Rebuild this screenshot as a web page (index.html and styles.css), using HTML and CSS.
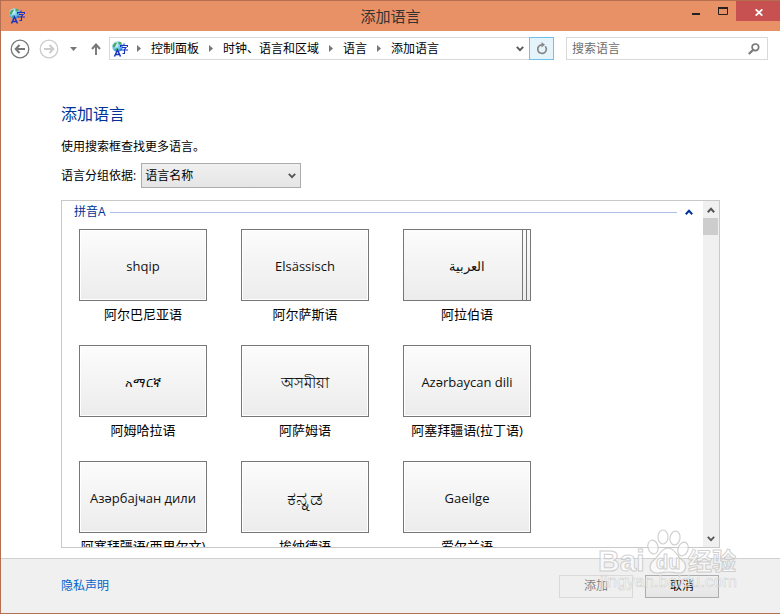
FILE: index.html
```html
<!DOCTYPE html>
<html lang="zh-CN">
<head>
<meta charset="utf-8">
<title>添加语言</title>
<link rel="stylesheet" href="styles.css">
</head>
<body>
<svg class="defs" aria-hidden="true">
  <defs>
    <radialGradient id="sea" cx="35%" cy="30%" r="75%">
      <stop offset="0" stop-color="#eefaff"/>
      <stop offset=".5" stop-color="#7fd0f2"/>
      <stop offset="1" stop-color="#2a86cc"/>
    </radialGradient>
    <symbol id="lang" viewBox="0 0 16 16">
      <circle cx="5.500" cy="5.500" r="5.300" fill="url(#sea)"/>
      <path d="M.5 5l2-3 2.500-.6L4.500 3 3 5.500 2 7zM6.500 .5l3 1-1 2h-2zM4 7l2 1-1 2-2-1z" fill="#43a860"/>
      <path d="M2.500 15.500L5.500 9 8.500 15.500M3.500 13.500H7.500" fill="none" stroke="#1a32c0" stroke-width="1.500"/>
      <path d="M12 2.500v1.500M8.500 6V4.500h7V6M10 6.500h4L12.500 8.500V12.500h-2M8.500 9h7.500" fill="none" stroke="#1a32c0" stroke-width="1.100"/>
    </symbol>
    <symbol id="down" viewBox="0 0 8 6"><path d="M.8 .8L4 4.200 7.200 .8" fill="none" stroke="currentColor" stroke-width="1.800"/></symbol>
    <symbol id="up" viewBox="0 0 8 6"><path d="M.8 5.200L4 1.800 7.200 5.200" fill="none" stroke="currentColor" stroke-width="2"/></symbol>
    <symbol id="right" viewBox="0 0 4 7"><path d="M0 0l4 3.500L0 7z" fill="currentColor"/></symbol>
  </defs>
</svg>
<div class="window">
  <header class="titlebar">
    <svg class="app-icon"><use href="#lang"/></svg>
    <h1>添加语言</h1>
    <div class="controls">
      <button aria-label="最小化"><svg viewBox="0 0 8 8" width="8" height="8"><path d="M0 6h8v2H0z" fill="#222"/></svg></button>
      <button aria-label="最大化"><svg viewBox="0 0 10 8" width="10" height="8"><path d="M.5 1h9v6.500h-9z" fill="none" stroke="#222"/><path d="M0 0h10v2H0z" fill="#222"/></svg></button>
      <button class="close" aria-label="关闭"><svg viewBox="0 0 8 7" width="8" height="7"><path d="M.7 .3L7.300 6.700M7.300 .3L.7 6.700" stroke="#fff" stroke-width="1.700"/></svg></button>
    </div>
  </header>
  <nav class="toolbar">
    <button class="round" aria-label="后退"><svg viewBox="0 0 20 20"><circle cx="10" cy="10" r="8.800" fill="none" stroke="currentColor" stroke-width="1.300"/><path d="M15 10H6M9.500 6L5.700 10l3.800 4" fill="none" stroke="currentColor" stroke-width="2"/></svg></button>
    <button class="round off" disabled aria-label="前进"><svg viewBox="0 0 20 20"><circle cx="10" cy="10" r="8.800" fill="none" stroke="currentColor" stroke-width="1.300"/><path d="M5 10h9M10.500 6l3.800 4-3.800 4" fill="none" stroke="currentColor" stroke-width="2"/></svg></button>
    <button class="recent" aria-label="最近"><svg viewBox="0 0 7 4" width="7" height="4"><path d="M0 0h7L3.500 4z" fill="currentColor"/></svg></button>
    <button class="level" aria-label="上移"><svg viewBox="0 0 10 12" width="10" height="12"><path d="M5 12V2M1 6l4-4.500L9 6" fill="none" stroke="currentColor" stroke-width="1.900"/></svg></button>
    <div class="address">
      <svg class="app-icon"><use href="#lang"/></svg>
      <svg class="sep"><use href="#right"/></svg><a href="#">控制面板</a>
      <svg class="sep"><use href="#right"/></svg><a href="#">时钟、语言和区域</a>
      <svg class="sep"><use href="#right"/></svg><a href="#">语言</a>
      <svg class="sep"><use href="#right"/></svg><a href="#">添加语言</a>
      <button class="history" aria-label="以前的位置"><svg class="chev"><use href="#down"/></svg></button>
      <button class="refresh" aria-label="刷新"><svg viewBox="0 0 12 13" width="12" height="13"><path d="M9.200 4.200A4.300 4.300 0 1 1 6 2.800" fill="none" stroke="currentColor" stroke-width="1.700"/><path d="M5.500 0v5.400L9 2.700z" fill="currentColor"/></svg></button>
    </div>
    <div class="search">
      <input type="search" aria-label="搜索语言" placeholder="搜索语言">
      <svg viewBox="0 0 12 12" width="12" height="12"><circle cx="7.400" cy="4.300" r="3.300" fill="none" stroke="#777" stroke-width="1.700"/><path d="M5 7L.8 11" stroke="#777" stroke-width="2.200"/></svg>
    </div>
  </nav>
  <main>
    <h2>添加语言</h2>
    <p>使用搜索框查找更多语言。</p>
    <div class="group">
      <label for="by">语言分组依据:</label>
      <div class="drop">
        <select id="by"><option>语言名称</option></select>
        <svg class="chev"><use href="#down"/></svg>
      </div>
    </div>
    <section class="panel">
      <div class="content">
        <h3><span>拼音A</span><svg class="chev"><use href="#up"/></svg></h3>
        <div class="grid">
          <div class="item"><button id="l1">shqip</button><label for="l1">阿尔巴尼亚语</label></div>
          <div class="item"><button id="l2">Elsässisch</button><label for="l2">阿尔萨斯语</label></div>
          <div class="item"><button id="l3" class="stack" lang="ar">العربية</button><label for="l3">阿拉伯语</label></div>
          <div class="item"><button id="l4" lang="am">አማርኛ</button><label for="l4">阿姆哈拉语</label></div>
          <div class="item"><button id="l5" class="large" lang="as">অসমীয়া</button><label for="l5">阿萨姆语</label></div>
          <div class="item"><button id="l6">Azərbaycan dili</button><label for="l6">阿塞拜疆语(拉丁语)</label></div>
          <div class="item"><button id="l7">Азәрбајҹан дили</button><label for="l7">阿塞拜疆语(西里尔文)</label></div>
          <div class="item"><button id="l8" class="huge" lang="kn">ಕನ್ನಡ</button><label for="l8">埃纳德语</label></div>
          <div class="item"><button id="l9">Gaeilge</button><label for="l9">爱尔兰语</label></div>
        </div>
      </div>
      <div class="scrollbar" aria-hidden="true">
        <svg class="chev"><use href="#up"/></svg>
        <div class="thumb"></div>
        <svg class="chev"><use href="#down"/></svg>
      </div>
    </section>
  </main>
  <footer>
    <a href="#">隐私声明</a>
    <button disabled>添加</button>
    <button class="cancel">取消</button>
  </footer>
  <svg class="watermark" viewBox="0 0 144 70" aria-hidden="true">
    <g fill="#fff" fill-opacity=".6" stroke="#c4c4c4" stroke-opacity=".8">
      <g stroke-width="1.200">
        <ellipse cx="55" cy="18" rx="5" ry="7" transform="rotate(-15 55 18)"/>
        <ellipse cx="65" cy="8" rx="5" ry="7"/>
        <ellipse cx="77" cy="9" rx="5" ry="7" transform="rotate(10 77 9)"/>
        <ellipse cx="85" cy="20" rx="5" ry="7" transform="rotate(20 85 20)"/>
        <path d="M70 19c7 0 9 8 14 12 6 5 4 13-3 13-5 0-7-1-11-1s-6 1-11 1c-8 0-9-8-3-13 5-4 7-12 14-12z"/>
      </g>
      <text class="brand" x="0" y="42">Bai</text>
      <text class="du" x="58" y="40">du</text>
      <text class="cn" x="90" y="41">经验</text>
      <text class="url" x="2" y="58">jingyan.baidu.com</text>
    </g>
  </svg>
</div>
</body>
</html>
```
FILE: styles.css
```css
* { box-sizing: border-box; }
body {
  margin: 0;
  font: 12px/18px "Open Sans", "Noto Sans CJK SC", sans-serif;
  color: #000;
}
.defs { position: absolute; width: 0; height: 0; }
button, input, select { font: inherit; color: inherit; }
button { padding: 0; border: 0; background: none; }
a { color: inherit; text-decoration: none; }
svg { display: block; flex: none; }
h1, h2, h3, p { margin: 0; font-weight: normal; }
.window {
  position: relative;
  display: flex;
  flex-direction: column;
  height: 100vh;
  border: 1px solid #b56f50;
  border-right: 0;
  background: #fff;
}
.app-icon { width: 16px; height: 16px; }
.chev { width: 8px; height: 6px; color: #555; }

.titlebar {
  display: grid;
  grid-template-columns: 1fr auto 1fr;
  align-items: center;
  height: 30px;
  background: #e99166;
}
.titlebar .app-icon { margin-left: 8px; }
.titlebar h1 { font-size: 15px; line-height: 28px; color: #333; }
.controls { display: flex; justify-content: flex-end; align-self: start; }
.controls button { display: grid; place-items: center; width: 27px; height: 20px; }
.controls .close { width: 44px; padding-left: 2px; padding-top: 2px; background: #c75050; }

.toolbar { display: flex; align-items: center; padding: 6px 12px 0 9px; color: #777; }
.round { width: 20px; height: 20px; margin-right: 9px; }
.round svg { width: 20px; height: 20px; }
.off { color: #ccc; margin-right: 11px; }
.recent { margin-right: 14px; }
.level { margin-right: 8px; }
.address {
  display: flex;
  flex: 1;
  align-items: center;
  height: 23px;
  padding-left: 2px;
  border: 1px solid #d9d9d9;
}
.address a { color: #000; line-height: 20px; white-space: nowrap; }
.sep { width: 4px; height: 7px; margin: 0 10px; }
.address .app-icon + .sep { margin-left: 9px; }
.history { margin-left: auto; padding: 0 5px; }
.refresh {
  display: grid;
  place-items: center;
  width: 25px;
  height: 23px;
  margin-right: -1px;
  border: 1px solid #70c0e7;
  background: #e5f3fb;
  color: #888;
}
.search {
  display: flex;
  align-items: center;
  width: 202px;
  height: 23px;
  margin-left: 12px;
  padding: 0 7px 0 5px;
  border: 1px solid #d9d9d9;
}
.search input { flex: 1; min-width: 0; padding: 0; border: 0; outline: 0; background: none; }
.search input::placeholder { color: #6d6d6d; }

main {
  display: flex;
  flex: 1;
  flex-direction: column;
  min-height: 0;
  padding: 42px 60px 10px;
}
h2 { font-size: 16px; line-height: 24px; color: #003399; }
p { margin-top: 12px; }
.group { display: flex; align-items: center; gap: 5px; margin-top: 7px; }
.drop { position: relative; }
.drop select {
  appearance: none;
  display: block;
  width: 160px;
  height: 25px;
  padding: 0 3px;
  border: 1px solid #acacac;
  border-radius: 0;
  background: linear-gradient(#f0f0f0, #e5e5e5);
}
.drop .chev { position: absolute; right: 5px; top: 10px; pointer-events: none; }
.panel {
  display: flex;
  flex: 1;
  min-height: 0;
  margin-top: 12px;
  border: 1px solid #c8c8c8;
}
.content { flex: 1; overflow: hidden; padding: 0 10px 0 12px; }
h3 { display: flex; align-items: center; height: 22px; gap: 4px; font-size: 12px; color: #003399; }
h3::after { content: ""; flex: 1; order: 1; height: 1px; background: #b0bfe4; }
h3 .chev { order: 2; margin-left: 4px; color: #003399; }
.grid {
  display: grid;
  grid-template-columns: repeat(auto-fill, 128px);
  gap: 18px 34px;
  padding: 6px 5px;
}
.item { display: flex; flex-direction: column; align-items: center; font-size: 13px; }
.item button {
  width: 128px;
  height: 72px;
  padding-top: 2px;
  border: 1px solid #777;
  background: linear-gradient(#fcfcfc, #ececec);
  box-shadow: inset 0 0 0 1px #fff;
  color: #111;
}
.item .stack {
  background:
    linear-gradient(#777, #777) right 7px top / 1px 100% no-repeat,
    linear-gradient(#777, #777) right 3px top / 1px 100% no-repeat,
    linear-gradient(#fcfcfc, #ececec);
  box-shadow: none;
}
.item .large { font-size: 15px; }
.item .huge { font-size: 20px; }
.item label { line-height: 26px; white-space: nowrap; }
.scrollbar {
  display: flex;
  flex-direction: column;
  align-items: center;
  width: 16px;
  padding: 6px 1px 5px 0;
  background: #f0f0f0;
}
.thumb { width: 15px; height: 17px; margin: 5px 0 auto; background: #cdcdcd; }

footer {
  display: flex;
  align-items: center;
  height: 55px;
  padding: 0 61px 0 60px;
  border-top: 1px solid #d0d0d0;
  background: #f0f0f0;
}
footer a { margin-right: auto; color: #0066cc; }
footer button {
  width: 74px;
  height: 23px;
  margin-left: 12px;
  border: 1px solid #d9d9d9;
  background: #efefef;
  color: #838383;
}
footer .cancel { border-color: #acacac; background: linear-gradient(#f0f0f0, #e5e5e5); color: #000; }

.watermark {
  position: absolute;
  right: 38px;
  bottom: 14px;
  width: 144px;
  height: 70px;
  pointer-events: none;
}
.brand { font: bold 30px "Liberation Sans", sans-serif; }
.du { font: bold 20px "Liberation Sans", sans-serif; }
.cn { font: bold 24px "Noto Sans CJK SC", sans-serif; }
.url { font: 17px "Liberation Sans", sans-serif; stroke-width: .5px; }
```
